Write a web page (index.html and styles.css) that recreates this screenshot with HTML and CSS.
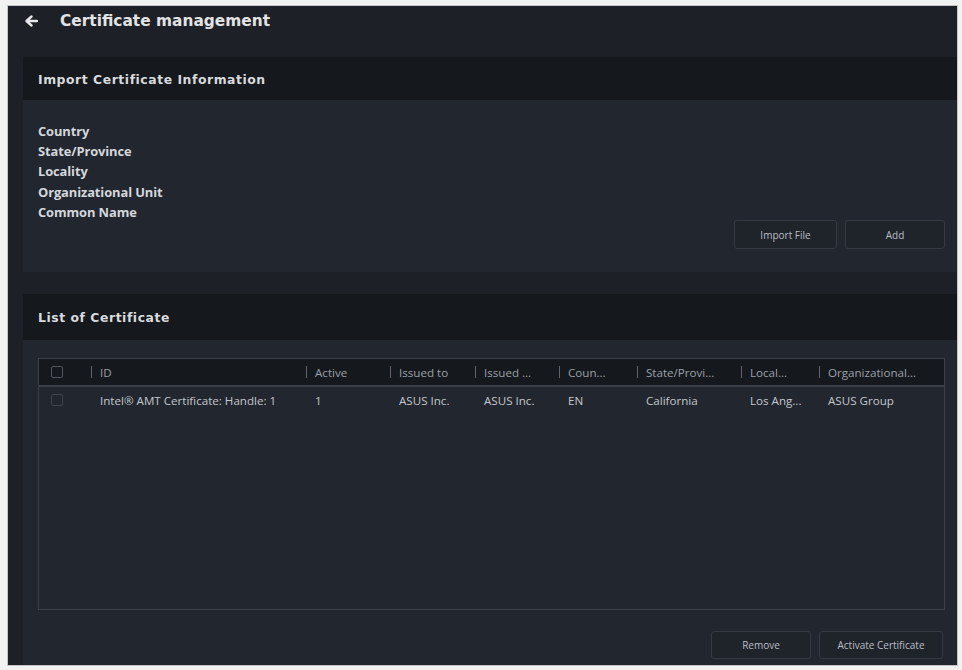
FILE: index.html
```html
<!DOCTYPE html>
<html lang="en">
<head>
    <meta charset="UTF-8">
    <title>Certificate management</title>
    <meta name="viewport" content="width=device-width, initial-scale=1.0">
    <link rel="stylesheet" href="styles.css">
</head>
<body>
    <div class="frame">
        <div class="topbar">
            <svg class="back" width="14" height="14" viewBox="0 0 14 14">
                <path d="M13 7H3.5M7.5 2.5L2.5 7l5 4.5" fill="none" stroke="#e8e8e8" stroke-width="2.4" stroke-linecap="round" stroke-linejoin="round"/>
            </svg>
            <h1>Certificate management</h1>
        </div>

        <section class="panel">
            <div class="panel-head">Import Certificate Information</div>
            <div class="panel-body import-body">
                <ul class="fields">
                    <li>Country</li>
                    <li>State/Province</li>
                    <li>Locality</li>
                    <li>Organizational Unit</li>
                    <li>Common Name</li>
                </ul>
                <div class="actions">
                    <button class="btn btn-import">Import File</button>
                    <button class="btn btn-add">Add</button>
                </div>
            </div>
        </section>

        <section class="panel list-panel">
            <div class="panel-head list-head">List of Certificate</div>
            <div class="panel-body list-body">
                <div class="table">
                    <div class="row head-row">
                        <div class="cell check"><span class="box"></span></div>
                        <div class="cell"><i class="sep"></i>ID</div>
                        <div class="cell"><i class="sep"></i>Active</div>
                        <div class="cell"><i class="sep"></i>Issued to</div>
                        <div class="cell"><i class="sep"></i>Issued ...</div>
                        <div class="cell"><i class="sep"></i>Coun...</div>
                        <div class="cell"><i class="sep"></i>State/Provi...</div>
                        <div class="cell"><i class="sep"></i>Local...</div>
                        <div class="cell"><i class="sep"></i>Organizational...</div>
                        <div class="cell end"><i class="sep"></i></div>
                    </div>
                    <div class="row data-row">
                        <div class="cell check"><span class="box dim"></span></div>
                        <div class="cell">Intel® AMT Certificate: Handle: 1</div>
                        <div class="cell">1</div>
                        <div class="cell">ASUS Inc.</div>
                        <div class="cell">ASUS Inc.</div>
                        <div class="cell">EN</div>
                        <div class="cell">California</div>
                        <div class="cell">Los Ang...</div>
                        <div class="cell">ASUS Group</div>
                        <div class="cell end"></div>
                    </div>
                </div>
                <div class="actions list-actions">
                    <button class="btn btn-remove">Remove</button>
                    <button class="btn btn-activate">Activate Certificate</button>
                </div>
            </div>
        </section>
    </div>
</body>
</html>
```

FILE: styles.css
```css
body { margin: 0; background: #f2f2f2; font-family: "Open Sans", "DejaVu Sans", sans-serif; }
.frame { box-sizing: border-box; width: 951px; height: 661px; margin: 5px 0 0 7px; border: 1px solid #c4c4c4; background: #1d2026; overflow: hidden; }

.topbar { display: flex; align-items: center; height: 29px; padding: 0 0 0 16px; }
.back { margin-top: 1px; }
.topbar h1 { margin: 0 0 0 22px; font: bold 15.4px "DejaVu Sans", sans-serif; color: #e2e3e5; }

.panel { margin: 22px 0 0 15px; }
.panel-head { height: 43px; padding-left: 15px; background: #15181c; color: #d8dadd; font: bold 12.4px/45px "DejaVu Sans", sans-serif; letter-spacing: 0.55px; }
.panel-body { background: #22262e; }

.import-body { height: 172px; padding: 21px 12px 0 15px; box-sizing: border-box; }
.fields { list-style: none; margin: 0; padding: 0; }
.fields li { font-weight: bold; font-size: 12.9px; line-height: 20.2px; color: #d4d7dc; letter-spacing: -0.1px; }

.actions { display: flex; justify-content: flex-end; gap: 8px; }
.import-body .actions { margin-top: -2px; }
.btn { box-sizing: border-box; height: 29px; background: #1f232a; border: 1px solid #343943; border-radius: 3px; color: #b9bdc4; font: 10px "Open Sans", sans-serif; padding: 0; }
.btn-import { width: 103px; }
.btn-add { width: 100px; }
.btn-remove { width: 100px; height: 28px; }
.btn-activate { width: 124px; height: 28px; }

.list-panel { margin-top: 22px; }
.list-head { height: 46px; line-height: 47px; }
.list-body { height: 330px; padding: 18px 12px 0 15px; box-sizing: border-box; }

.table { height: 252px; box-sizing: border-box; border: 1px solid #3a3f49; }
.row { display: grid; grid-template-columns: 52px 215px 84px 85px 84px 78px 104px 78px 124px 1fr; align-items: center; font-size: 11.6px; }
.head-row { height: 26px; background: #15181c; border-bottom: 2px solid #3a3f49; color: #9ba0a8; }
.data-row { height: 26px; color: #c3c7cd; }
.cell { display: flex; align-items: center; white-space: nowrap; overflow: hidden; }
.data-row .cell { padding-left: 9px; }
.sep { display: inline-block; width: 1px; height: 12px; background: #5e636c; margin-right: 8px; }
.row .check { padding-left: 12px; }
.box { display: inline-block; width: 10px; height: 10px; border: 1px solid #50555e; border-radius: 2px; }
.box.dim { border-color: #3f444c; }

.list-actions { margin-top: 21px; padding-right: 2px; }
```
